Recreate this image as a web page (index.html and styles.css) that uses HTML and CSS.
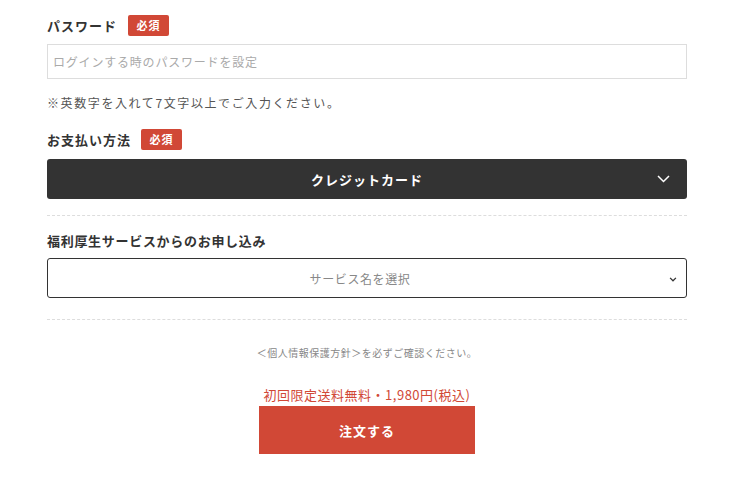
FILE: index.html
```html
<!DOCTYPE html>
<html>
<head>
<meta charset="utf-8">
<title>ご注文フォーム</title>
<link rel="stylesheet" href="styles.css">
</head>
<body>
<form class="form">
	<div class="label-row">
		<span class="label">パスワード</span>
		<span class="badge">必須</span>
	</div>
	<input class="text-input" type="password" placeholder="ログインする時のパスワードを設定">
	<p class="hint">※英数字を入れて7文字以上でご入力ください。</p>

	<div class="label-row pay">
		<span class="label">お支払い方法</span>
		<span class="badge">必須</span>
	</div>
	<div class="select dark">
		<span>クレジットカード</span>
		<svg class="chev" width="13" height="8" viewBox="0 0 13 8"><path d="M1 1l5.5 5.5L12 1" fill="none" stroke="#fff" stroke-width="1.5"/></svg>
	</div>

	<hr class="dash">

	<div class="label-row welfare">
		<span class="label">福利厚生サービスからのお申し込み</span>
	</div>
	<div class="select light">
		<span>サービス名を選択</span>
		<svg class="chev small" width="9" height="6" viewBox="0 0 9 6"><path d="M1 1l3.5 3.5L8 1" fill="none" stroke="#333" stroke-width="1.5"/></svg>
	</div>

	<hr class="dash last">

	<p class="policy">＜個人情報保護方針＞を必ずご確認ください。</p>
	<p class="price">初回限定送料無料・1,980円(税込)</p>
	<div class="submit-wrap">
		<button class="submit" type="button">注文する</button>
	</div>
</form>
</body>
</html>
```

FILE: styles.css
```css
* { margin: 0; padding: 0; box-sizing: border-box; }
body { padding-left: 2px; font-family: "Noto Sans CJK JP", "Noto Sans", sans-serif; color: #333; background: #fff; }

.form { width: 640px; margin: 0 auto; padding-top: 14px; }

.label-row { display: flex; align-items: center; height: 22px; }
.label { font-size: 13px; font-weight: bold; letter-spacing: 1px; color: #333; }
.badge { display: inline-block; margin-left: 11px; width: 41px; height: 21px; line-height: 21px; text-align: center; background: #d14836; color: #fff; font-size: 11px; font-weight: bold; border-radius: 2px; letter-spacing: 1px; }
.pay { margin-top: 15px; }
.pay .badge { margin-left: 10px; }
.welfare { margin-top: 14px; height: 20px; }
.welfare .label { letter-spacing: 0.7px; }

.text-input { display: block; width: 100%; height: 35px; margin-top: 8px; padding: 0 5px; border: 1px solid #ddd; font-family: inherit; font-size: 12px; letter-spacing: 0.8px; }
.text-input::placeholder { color: #aaa; }

.hint { margin-top: 14px; font-size: 12px; line-height: 20px; color: #555; letter-spacing: 1.6px; }

.select { position: relative; display: flex; align-items: center; justify-content: center; height: 40px; margin-top: 9px; border-radius: 3px; }
.select.dark { background: #333; color: #fff; font-size: 13px; font-weight: bold; letter-spacing: 1px; }
.select.light { margin-top: 8px; padding-right: 14px; border: 1px solid #333; color: #888; font-size: 12px; letter-spacing: 0.6px; }
.chev { position: absolute; right: 17px; top: 16px; }
.chev.small { right: 9px; top: 18px; width: 8px; height: 5px; }

.dash { border: none; border-top: 1px dashed #ddd; margin-top: 16px; }
.dash.last { margin-top: 21px; }

.policy { margin-top: 25px; text-align: center; font-size: 10px; line-height: 16px; color: #888; letter-spacing: 0.5px; }
.price { margin-top: 24px; text-align: center; font-size: 13px; line-height: 20px; color: #d14836; letter-spacing: 0.5px; }

.submit-wrap { display: flex; justify-content: center; margin-top: 1px; }
.submit { width: 216px; height: 48px; border: none; background: #d14836; color: #fff; font-family: inherit; font-size: 13px; font-weight: bold; letter-spacing: 1px; }
```
